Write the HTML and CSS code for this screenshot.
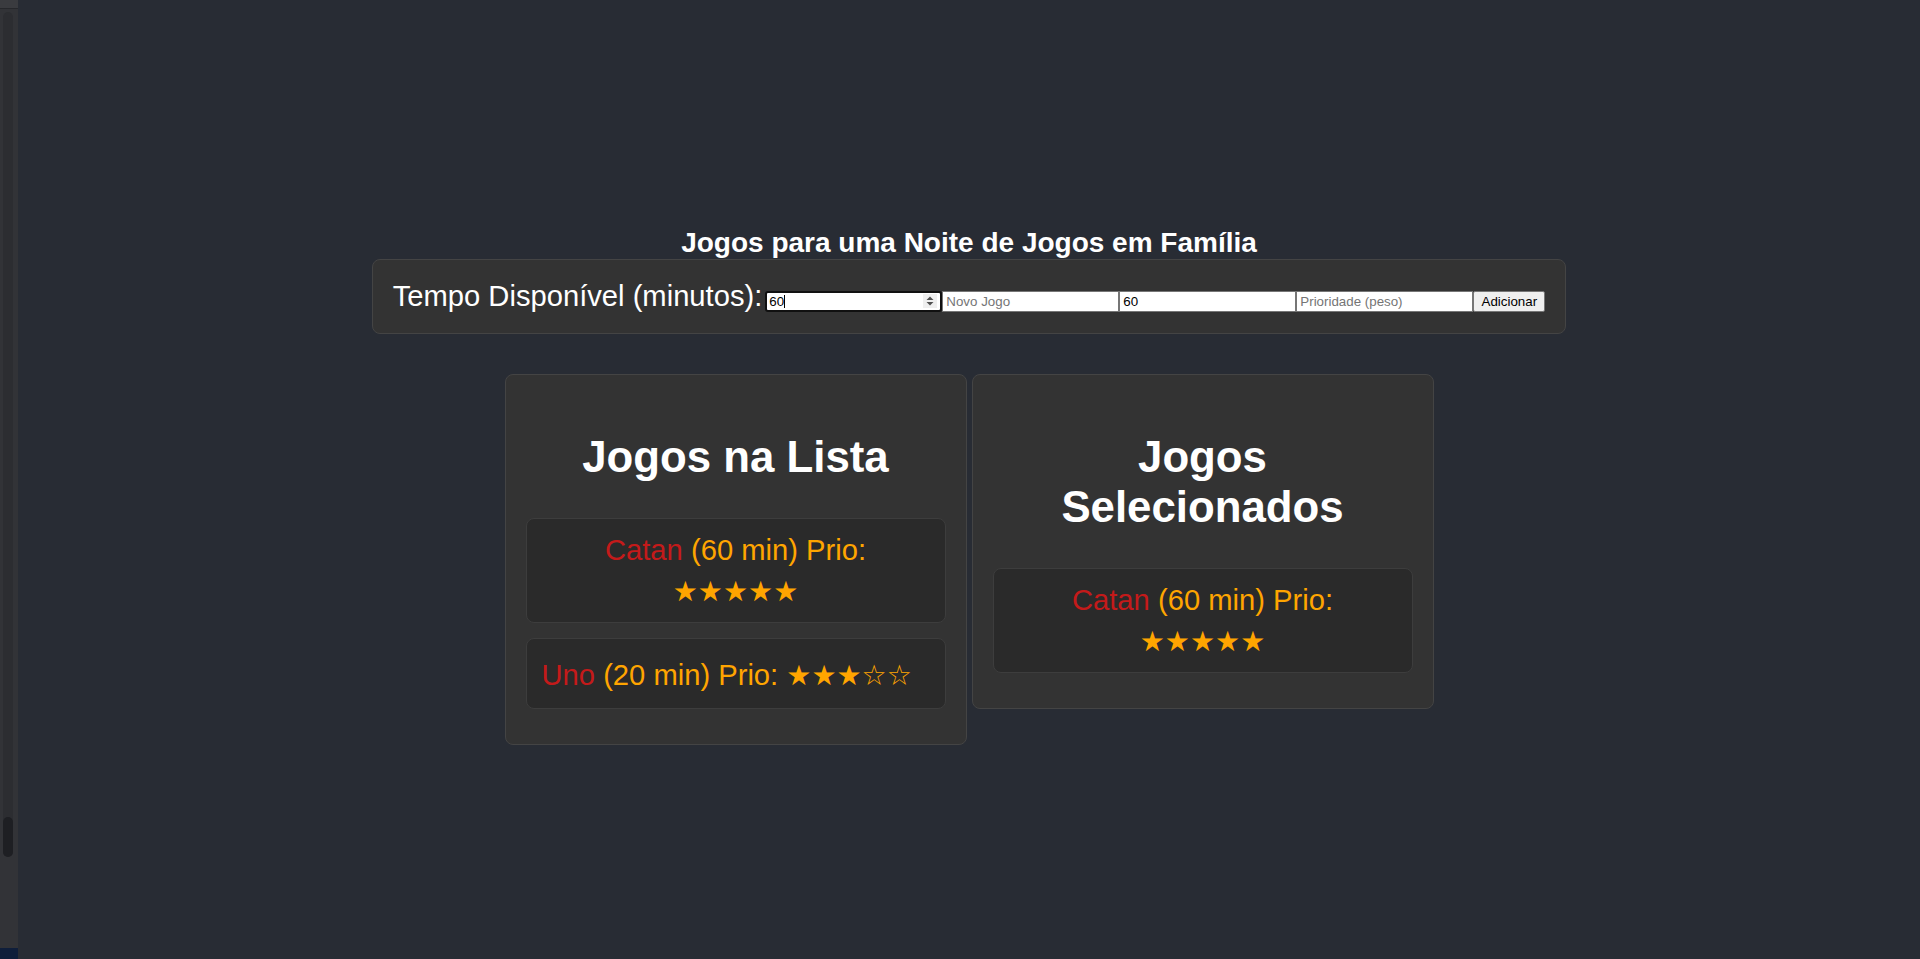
FILE: index.html
```html
<!DOCTYPE html>
<html lang="pt-BR">
<head>
<meta charset="utf-8">
<title>Noite de Jogos</title>
<link rel="stylesheet" href="styles.css">
</head>
<body>
<div class="shell">
  <aside class="side">
    <div class="side-top"></div>
    <div class="side-track"><div class="side-thumb"></div></div>
    <div class="side-fill"></div>
    <div class="side-bottom"></div>
  </aside>
  <main class="app">
    <h1 class="title">Jogos para uma Noite de Jogos em Família</h1>
    <div class="controls">
      <label class="time-label" for="tempo">Tempo Disponível (minutos):</label>
      <span class="num-wrap"><input id="tempo" class="field focused" type="text" value="60"><span class="caret"></span><span class="spin"><svg width="14" height="14" viewBox="0 0 14 14"><path d="M3.5 6 L7 2.5 L10.5 6 Z" fill="#505050"/><path d="M3.5 8 L7 11.5 L10.5 8 Z" fill="#505050"/></svg></span></span>
      <input class="field" type="text" placeholder="Novo Jogo">
      <input class="field" type="text" value="60">
      <input class="field" type="text" placeholder="Prioridade (peso)">
      <button class="add-btn" type="button">Adicionar</button>
    </div>
    <div class="lists">
      <section class="card">
        <h2>Jogos na Lista</h2>
        <ul class="games">
          <li class="game wrap"><span class="name">Catan</span> <span class="info">(60 min) Prio:</span><span class="stars">★★★★★</span></li>
          <li class="game single"><span class="name">Uno</span> <span class="info">(20 min) Prio: <span class="stars-inline">★★★☆☆</span></span></li>
        </ul>
      </section>
      <section class="card">
        <h2>Jogos Selecionados</h2>
        <ul class="games">
          <li class="game wrap"><span class="name">Catan</span> <span class="info">(60 min) Prio:</span><span class="stars">★★★★★</span></li>
        </ul>
      </section>
    </div>
  </main>
</div>
</body>
</html>
```

FILE: styles.css
```css
html, body {
  margin: 0;
  padding: 0;
}

body {
  background: #282c34;
  font-family: "Liberation Sans", Arial, sans-serif;
}

.shell {
  display: flex;
  height: 100vh;
}

/* left strip */
.side {
  width: 18px;
  flex: none;
  background: #323337;
  display: flex;
  flex-direction: column;
}

.side-top {
  height: 8px;
  background: #3a3b3f;
  border-bottom: 1px solid #26272b;
}

.side-track {
  height: 845px;
  margin: 3px 5px 0 3px;
  background: #2c2d31;
  border-radius: 5px;
  display: flex;
  flex-direction: column;
  justify-content: flex-end;
}

.side-thumb {
  height: 40px;
  background: #1e1f23;
  border-radius: 5px;
}

.side-fill {
  flex: 1;
}

.side-bottom {
  height: 11px;
  background: #0f1e3a;
}

/* main */
.app {
  flex: 1;
  display: flex;
  flex-direction: column;
  align-items: center;
  justify-content: center;
  color: #fff;
  font-size: 29.18px;
}

.title {
  font-size: 28px;
  font-weight: bold;
  margin: 13px 0 0;
}

.controls {
  display: flex;
  align-items: baseline;
  background: #333;
  border: 1px solid #444;
  border-radius: 8px;
  padding: 20px;
}

.time-label {
  margin-right: 3px;
}

.num-wrap {
  position: relative;
  display: inline-flex;
}

.field {
  width: 177px;
  height: 21px;
  box-sizing: border-box;
  margin: 0;
  border: 1px solid #767676;
  border-radius: 0;
  padding: 1px 3px;
  background: #fff;
  color: #000;
  font: 13.33px "Liberation Sans", Arial, sans-serif;
}

.field::placeholder {
  color: #757575;
}

.field.focused {
  border: 2px solid #101010;
  border-radius: 3px;
  padding: 0 2px;
  outline: none;
}

.caret {
  position: absolute;
  left: 19px;
  top: 4px;
  width: 1px;
  height: 13px;
  background: #000;
}

.spin {
  position: absolute;
  right: 5px;
  top: 3px;
  width: 14px;
  height: 14px;
  background: #efefef;
  display: flex;
}

.add-btn {
  width: 72px;
  height: 21px;
  box-sizing: border-box;
  margin: 0;
  padding: 1px 6px;
  border: 1px solid #767676;
  border-radius: 2px;
  background: #efefef;
  color: #000;
  font: 13.33px "Liberation Sans", Arial, sans-serif;
}

.lists {
  display: flex;
  align-items: flex-start;
  gap: 5px;
  margin-top: 40px;
}

.card {
  width: 462px;
  box-sizing: border-box;
  background: #333;
  border: 1px solid #444;
  border-radius: 8px;
  padding: 20px;
  text-align: center;
}

.card h2 {
  font-size: 43.77px;
  font-weight: bold;
  margin: 36.33px 0;
}

.games {
  list-style: none;
  margin: 0;
  padding: 0;
}

.game {
  background: #2a2a2a;
  border: 1px solid #3d3d3d;
  border-radius: 8px;
  padding: 15px;
  margin-bottom: 15px;
  line-height: 33.5px;
  text-align: left;
}

.game.wrap {
  text-align: center;
}

.game.single {
  padding: 17px 15px 13px;
  line-height: 38px;
}

.name {
  color: #c41a1a;
}

.info {
  color: #ffa500;
}

.stars {
  display: block;
  color: #ffa500;
  font-family: "DejaVu Sans", sans-serif;
  font-size: 28px;
  padding-top: 9px;
  line-height: 30px;
}

.stars-inline {
  font-family: "DejaVu Sans", sans-serif;
  font-size: 28px;
}
```
